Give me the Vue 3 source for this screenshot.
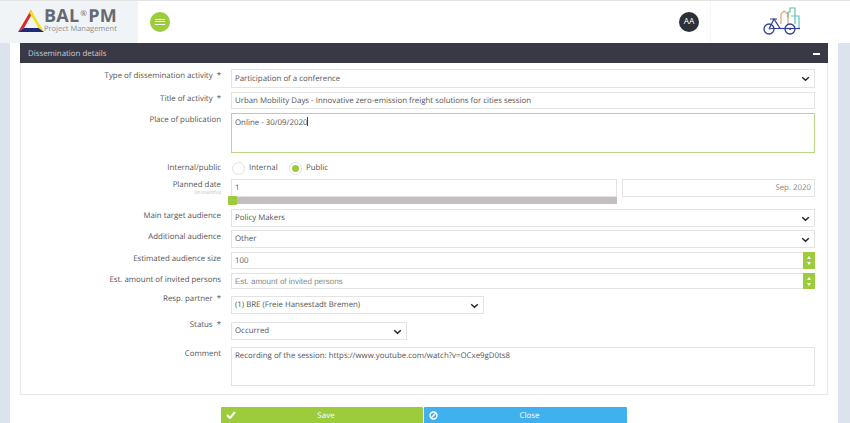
<script setup>
const chevron = 'M1.2 1.2 L4.5 4.3 L7.8 1.2'
</script>

<template>
  <div class="page">
    <header class="top">
      <div class="brand">
        <svg class="tri" width="26" height="24" viewBox="0 0 26 24">
          <path d="M0 23 L13 1 L14.5 4 L6 19 Z" fill="#d92b2b" />
          <path d="M13 1 L26 23 L20.5 19 L11.5 4 Z" fill="#f3df1c" />
          <path d="M0 23 L6 19 L20.5 19 L26 23 Z" fill="#1f2a7a" />
        </svg>
        <div class="brand-text">
          <div class="bal">BAL<sup>®</sup>PM</div>
          <div class="pm">Project Management</div>
        </div>
      </div>
      <button class="burger" aria-label="menu"><span></span><span></span><span></span></button>
      <div class="top-right">
        <div class="avatar">AA</div>
        <div class="bike">
          <svg width="38" height="29" viewBox="0 0 38 29" fill="none">
            <path d="M18 17 V7 L21 4 L25 7 V17" stroke="#ef9a72" stroke-width="1.2" />
            <path d="M25 11 V5 H27 V1 H32 V17" stroke="#5fc49c" stroke-width="1.2" />
            <path d="M28 9 H36 V21" stroke="#5cc4cc" stroke-width="1.2" />
            <path d="M17 21.5 H37" stroke="#2e3f96" stroke-width="1.2" />
            <circle cx="6" cy="22" r="5" stroke="#2e3f96" stroke-width="1.3" />
            <circle cx="27" cy="22" r="5" stroke="#2e3f96" stroke-width="1.3" />
            <circle cx="27" cy="22" r="1.1" fill="#2e3f96" />
            <path d="M6 22 L11 12 L17 21.5 H9 L6 22 M7 12 H14" stroke="#2e3f96" stroke-width="1.2" />
          </svg>
        </div>
      </div>
    </header>

    <main class="sheet">
      <section class="panel">
        <div class="panel-head">
          <span>Dissemination details</span>
          <span class="collapse"></span>
        </div>
        <div class="form">
          <div class="row r-select">
            <label>Type of dissemination activity <i>*</i></label>
            <div class="control select">
              Participation of a conference
              <svg class="chev" width="9" height="6" viewBox="0 0 9 6"><path :d="chevron" /></svg>
            </div>
          </div>
          <div class="row r-title">
            <label>Title of activity <i>*</i></label>
            <div class="control">Urban Mobility Days - Innovative zero-emission freight solutions for cities session</div>
          </div>
          <div class="row r-place">
            <label>Place of publication</label>
            <div class="control area focus">Online - 30/09/2020<span class="caret"></span></div>
          </div>
          <div class="row r-radio">
            <label>Internal/public</label>
            <div class="radios">
              <span class="radio"></span><span class="rlabel">Internal</span>
              <span class="radio on"><b></b></span><span class="rlabel">Public</span>
            </div>
          </div>
          <div class="row r-date">
            <label class="two">Planned date<small>(in months)</small></label>
            <div class="date-wrap">
              <div class="slider-col">
                <div class="control date-input">1</div>
                <div class="track"><span class="thumb"></span></div>
              </div>
              <div class="control date-out">Sep. 2020</div>
            </div>
          </div>
          <div class="row r-aud1">
            <label>Main target audience</label>
            <div class="control select">
              Policy Makers
              <svg class="chev" width="9" height="6" viewBox="0 0 9 6"><path :d="chevron" /></svg>
            </div>
          </div>
          <div class="row r-aud2">
            <label>Additional audience</label>
            <div class="control select">
              Other
              <svg class="chev" width="9" height="6" viewBox="0 0 9 6"><path :d="chevron" /></svg>
            </div>
          </div>
          <div class="row r-num1">
            <label>Estimated audience size</label>
            <div class="control num">100
              <span class="spin"><em class="up"></em><em class="down"></em></span>
            </div>
          </div>
          <div class="row r-num2">
            <label>Est. amount of invited persons</label>
            <div class="control num ph">Est. amount of invited persons
              <span class="spin"><em class="up"></em><em class="down"></em></span>
            </div>
          </div>
          <div class="row r-partner">
            <label>Resp. partner <i>*</i></label>
            <div class="control select w-partner">
              (1) BRE (Freie Hansestadt Bremen)
              <svg class="chev" width="9" height="6" viewBox="0 0 9 6"><path :d="chevron" /></svg>
            </div>
          </div>
          <div class="row r-status">
            <label>Status <i>*</i></label>
            <div class="control select w-status">
              Occurred
              <svg class="chev" width="9" height="6" viewBox="0 0 9 6"><path :d="chevron" /></svg>
            </div>
          </div>
          <div class="row r-comment">
            <label>Comment</label>
            <div class="control area comment">Recording of the session: https://www.youtube.com/watch?v=OCxe9gD0ts8</div>
          </div>
        </div>
      </section>
      <div class="actions">
        <button class="btn save">
          <svg class="btn-ic" width="10" height="8" viewBox="0 0 10 8" fill="none"><path d="M1 4 L4 7 L9 1" stroke="#fff" stroke-width="2" /></svg>
          Save
        </button>
        <button class="btn close">
          <svg class="btn-ic" width="9" height="9" viewBox="0 0 9 9" fill="none"><circle cx="4.5" cy="4.5" r="3.5" stroke="#fff" stroke-width="1.4" /><path d="M2 7 L7 2" stroke="#fff" stroke-width="1.4" /></svg>
          Close
        </button>
      </div>
    </main>
  </div>
</template>

<style scoped>
.page {
  width: 850px;
  height: 423px;
  overflow: hidden;
  background: #dde3ec;
  font-family: "Open Sans", "Noto Sans", sans-serif;
  font-size: 7.87px;
  text-rendering: geometricPrecision;
  color: #555;
  display: flex;
  flex-direction: column;
}
.top {
  height: 43px;
  flex: none;
  box-sizing: border-box;
  border-top: 1px solid #e4e4e4;
  background: #fff;
  display: flex;
  align-items: center;
}
.brand {
  width: 138px;
  height: 100%;
  background: #f1f4f7;
  display: flex;
  align-items: flex-start;
  box-sizing: border-box;
  padding: 8px 0 0 18px;
}
.tri { margin-right: 0; flex: none; }
.brand-text { margin-top: -1px; }
.bal {
  font-family: "Open Sans", sans-serif;
  font-weight: 700;
  font-size: 18px;
  line-height: 17px;
  letter-spacing: 0.2px;
  color: #666a70;
  white-space: nowrap;
}
.bal sup { font-size: 8px; font-weight: 400; vertical-align: 6px; line-height: 0; margin: 0 1px; }
.pm {
  font-size: 7.5px;
  line-height: 8px;
  color: #8a8d92;
  white-space: nowrap;
}
.burger {
  width: 20px;
  height: 20px;
  border-radius: 50%;
  border: 0;
  padding: 0;
  margin-left: 12px;
  margin-top: -1px;
  background: #9ccb3b;
  display: flex;
  flex-direction: column;
  align-items: center;
  justify-content: center;
  gap: 1.5px;
}
.burger span { width: 10px; height: 1px; background: #fff; display: block; }
.top-right { margin-left: auto; display: flex; align-items: center; height: 100%; }
.avatar {
  width: 20px;
  height: 20px;
  border-radius: 50%;
  background: #2c3038;
  color: #fff;
  font-size: 8.5px;
  line-height: 20px;
  text-align: center;
  margin-right: 11px;
  margin-top: -1px;
}
.bike {
  width: 140px;
  height: 100%;
  border-left: 1px solid #f6f6f6;
  box-sizing: border-box;
  padding: 6px 0 0 52px;
}
.sheet {
  flex: 1;
  margin: 0 12px 0 10px;
  background: #fff;
  padding: 0 10px;
  min-height: 0;
}
.panel {
  border: 1px solid #e8e8e8;
  border-top: 0;
  height: 352px;
  box-sizing: border-box;
}
.panel-head {
  height: 20px;
  margin: 0 -1px;
  background: #393945;
  color: #ccd;
  display: flex;
  align-items: center;
  justify-content: space-between;
  padding: 1px 8px 0;
  box-sizing: border-box;
}
.collapse { width: 7px; height: 2px; background: #fff; }
.form { padding-top: 6px; }
.row { display: flex; }
.row label {
  width: 210px;
  flex: none;
  text-align: right;
  padding-right: 10px;
  box-sizing: border-box;
  line-height: 13px;
  margin-top: 0.5px;
  white-space: nowrap;
}
.row label i { font-style: normal; margin-left: 2px; }
.control {
  box-sizing: border-box;
  width: 584px;
  height: 19px;
  border: 1px solid #e3e3e3;
  background: #fff;
  padding: 0 3px;
  line-height: 18px;
  position: relative;
  white-space: nowrap;
}
.chev { position: absolute; right: 4px; top: 6px; }
.chev path { fill: none; stroke: #23262d; stroke-width: 1.5; }
.r-title { margin-top: 4px; }
.r-title .control { height: 17px; line-height: 16px; }
.r-place { margin-top: 4px; }
.area { height: 40px; line-height: 16px; padding-top: 1px; }
.focus { border-color: #b9d58a; }
.caret { display: inline-block; width: 1px; height: 9px; background: #444; vertical-align: -1px; }
.r-radio { margin-top: 8px; height: 14px; }
.radios { display: flex; align-items: center; height: 14px; }
.radio {
  width: 13px;
  height: 13px;
  border-radius: 50%;
  border: 1px solid #e2e2e2;
  box-sizing: border-box;
  margin-left: 1px;
  margin-right: 4px;
  display: flex;
  align-items: center;
  justify-content: center;
}
.radio.on b { width: 7px; height: 7px; border-radius: 50%; background: #9ccb3b; }
.rlabel { width: 39px; }
.r-date { margin-top: 4px; height: 25px; }
.r-date .two { line-height: 9px; padding-top: 2px; margin-top: 0; }
.two small { display: block; font-size: 5px; line-height: 7px; color: #bbb; }
.date-wrap { display: flex; width: 584px; gap: 5px; }
.slider-col { width: 386px; flex: none; }
.date-input { width: 100%; height: 18px; line-height: 17px; }
.date-out { flex: 1; width: auto; height: 18px; text-align: right; color: #888; line-height: 17px; }
.track { height: 7px; background: #c4bebe; position: relative; }
.thumb { position: absolute; left: -3px; top: -1px; width: 9px; height: 9px; background: #9ccb3b; border-radius: 1px; }
.r-aud1 { margin-top: 5px; }
.r-aud1 .control, .r-aud2 .control { height: 18px; line-height: 17px; }
.r-aud2 { margin-top: 3px; }
.r-num1 { margin-top: 4px; }
.r-num2 { margin-top: 4px; }
.num { height: 17px; line-height: 16px; }
.r-num2 .num { height: 16px; line-height: 15px; }
.ph { color: #8a8a8a; font-family: "Liberation Sans", sans-serif; font-size: 8px; }
.spin {
  position: absolute;
  right: -1px;
  top: -1px;
  bottom: -1px;
  width: 12px;
  background: #9ccb3b;
  display: flex;
  flex-direction: column;
  align-items: center;
  justify-content: center;
  gap: 3px;
}
.spin em { width: 0; height: 0; border-left: 2.5px solid transparent; border-right: 2.5px solid transparent; }
.spin .up { border-bottom: 3px solid #fff; }
.spin .down { border-top: 3px solid #fff; }
.r-partner { margin-top: 7px; }
.r-partner .control, .r-status .control { height: 18px; line-height: 17px; }
.r-partner label, .r-status label { margin-top: -3px; }
.w-partner { width: 253px; }
.r-status { margin-top: 8px; }
.w-status { width: 176px; }
.r-comment { margin-top: 7px; }
.comment { height: 39px; line-height: 15px; padding-top: 1px; }
.actions { display: flex; padding-left: 201px; gap: 1px; margin-top: 12px; }
.btn {
  height: 16px;
  border: 0;
  padding: 0 0 0 8px;
  color: #fff;
  font: 8px "Open Sans", sans-serif;
  text-rendering: geometricPrecision;
  position: relative;
  text-align: center;
  border-radius: 1px 1px 0 0;
}
.btn-ic { position: absolute; left: 5px; top: 4px; }
.save { width: 202px; background: #9ccb3b; }
.close { width: 203px; background: #3fb1ee; }
</style>
